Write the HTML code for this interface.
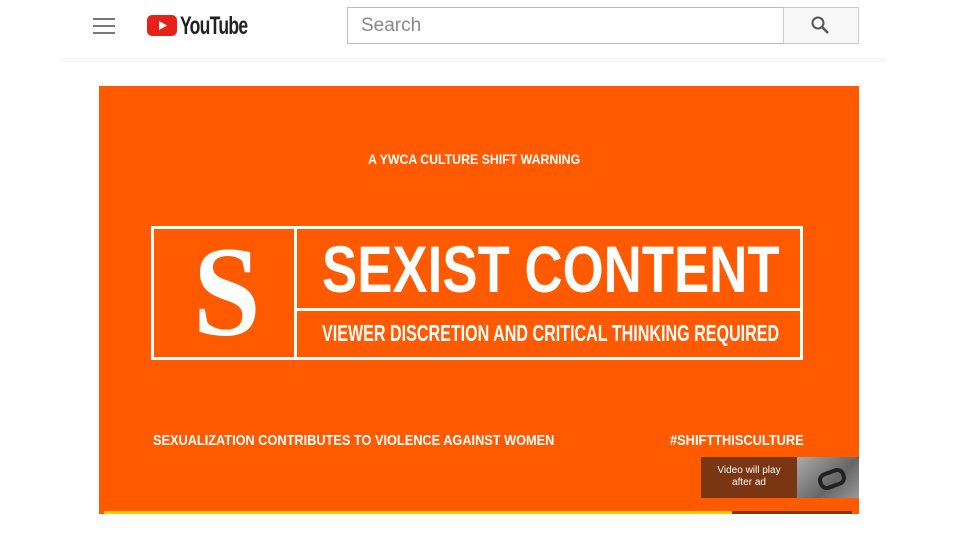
<!DOCTYPE html>
<html><head><meta charset="utf-8"><style>
*{margin:0;padding:0;box-sizing:border-box}
body{width:960px;height:540px;background:#fff;position:relative;overflow:hidden;font-family:"Liberation Sans",sans-serif}
.a{position:absolute}
.t{position:absolute;color:#fff;font-weight:bold;white-space:nowrap;transform-origin:0 0}
.ham div{position:absolute;left:0;width:22px;height:2px;background:#777}
</style></head><body>
<div class="a ham" style="left:93px;top:18px;width:22px;height:16px">
<div style="top:0"></div><div style="top:7px"></div><div style="top:14px"></div></div>
<svg class="a" style="left:147px;top:15px" width="30" height="21" viewBox="0 0 30 21"><rect width="30" height="21" rx="5" fill="#e62117"/><path d="M12 6 L20 10.5 L12 15Z" fill="#fff"/></svg>
<div class="t" style="left:180px;top:12px;color:#222;font-size:25px;letter-spacing:-1px;transform:scaleX(0.7)">YouTube</div>
<div class="a" style="left:347px;top:7px;width:436px;height:37px;border:1px solid #bbb;border-right:none"></div>
<div class="a" style="left:361px;top:15px;font-size:19px;color:#888">Search</div>
<div class="a" style="left:783px;top:7px;width:76px;height:37px;border:1px solid #ccc;background:#f8f8f8"></div>
<svg class="a" style="left:810px;top:15px" width="20" height="20" viewBox="0 0 20 20"><circle cx="8" cy="8" r="5.5" fill="none" stroke="#555" stroke-width="2"/><path d="M12 12L18 18" stroke="#555" stroke-width="2.5"/></svg>
<div class="a" style="left:60px;top:58px;width:826px;height:4px;background:#f8f8f8"></div>

<div class="a" style="left:99px;top:86px;width:760px;height:428px;background:#ff5a00"></div>
<div class="t" style="left:368px;top:151px;font-size:14px;transform:scaleX(0.88)">A YWCA CULTURE SHIFT WARNING</div>
<div class="a" style="left:151px;top:226px;width:652px;height:134px;border:3px solid #fff"></div>
<div class="a" style="left:294px;top:226px;width:3px;height:134px;background:#fff"></div>
<div class="a" style="left:294px;top:308px;width:509px;height:3px;background:#fff"></div>
<div class="t" style="left:193px;top:228px;font-family:'Liberation Serif',serif;font-size:128px;line-height:128px;transform:scaleX(0.95)">S</div>
<div class="t" style="left:322px;top:234px;font-size:66px;line-height:70px;transform:scaleX(0.80)">SEXIST CONTENT</div>
<div class="t" style="left:322px;top:320px;font-size:23px;line-height:26px;transform:scaleX(0.7)">VIEWER DISCRETION AND CRITICAL THINKING REQUIRED</div>
<div class="t" style="left:153px;top:432px;font-size:15px;transform:scaleX(0.85)">SEXUALIZATION CONTRIBUTES TO VIOLENCE AGAINST WOMEN</div>
<div class="t" style="left:670px;top:432px;font-size:15px;transform:scaleX(0.855)">#SHIFTTHISCULTURE</div>
<div class="a" style="left:701px;top:457px;width:96px;height:41px;background:#7a3512"></div>
<div class="a" style="left:701px;top:465px;width:96px;text-align:center;color:#fff;font-size:10px;line-height:12px">Video will play<br>after ad</div>
<div class="a" style="left:797px;top:457px;width:62px;height:41px;background:linear-gradient(135deg,#aaa,#666 60%,#999)"></div>
<div class="a" style="left:818px;top:470px;width:28px;height:18px;border:4px solid #222;border-radius:8px;transform:rotate(-20deg)"></div>
<div class="a" style="left:104px;top:511px;width:628px;height:3px;background:#ffcc00"></div>
<div class="a" style="left:732px;top:511px;width:120px;height:3px;background:#7a3a1a"></div>
</body></html>
